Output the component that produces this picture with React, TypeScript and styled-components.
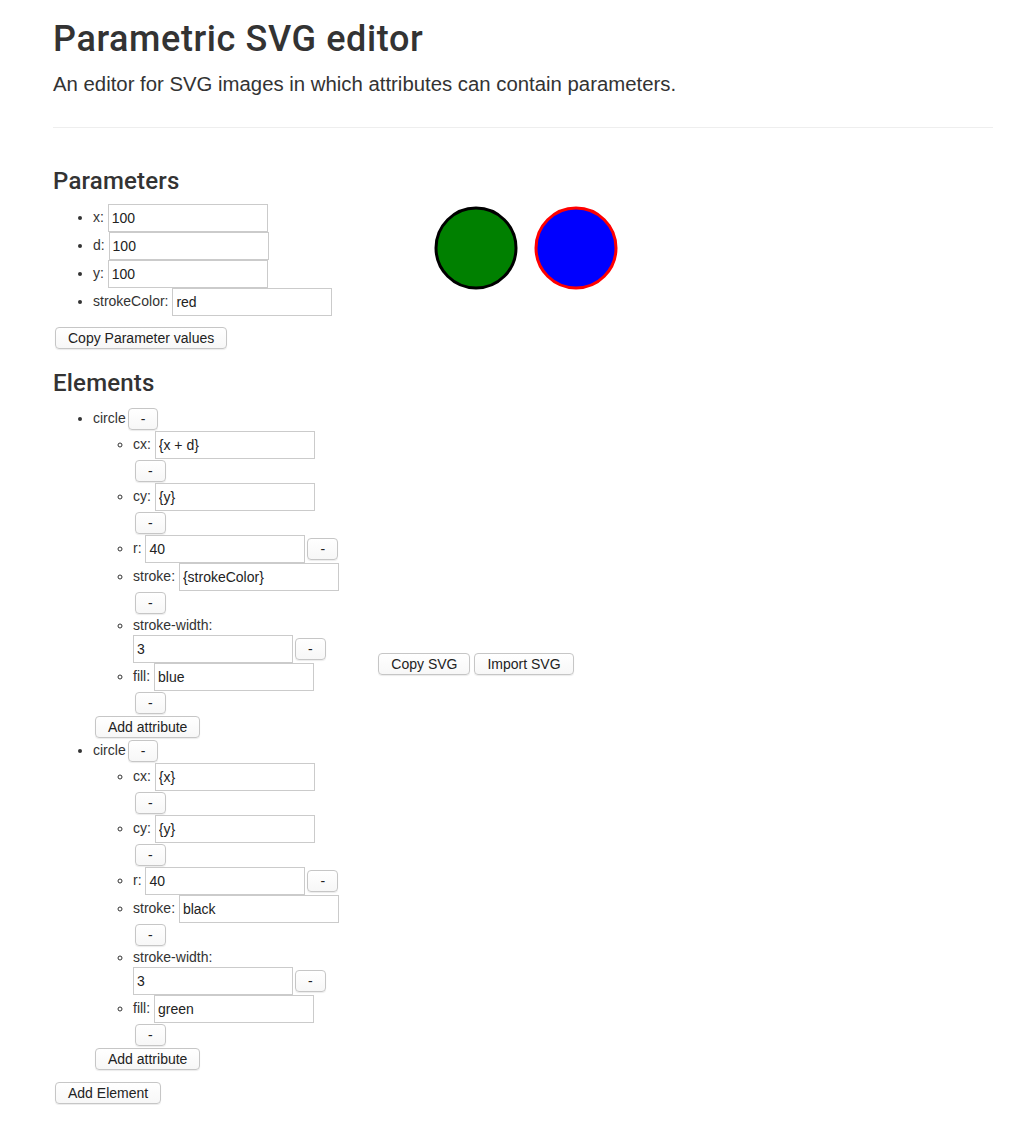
import React from "react";
import styled, { createGlobalStyle } from "styled-components";

const GlobalStyle = createGlobalStyle`
  html, body { margin: 0; padding: 0; background: #fff; }
  body {
    font-family: "Liberation Sans", Helvetica, Arial, sans-serif;
    font-size: 14px;
    line-height: 20px;
    color: #333;
  }
  * { box-sizing: border-box; }
`;

const Page = styled.div`
  width: 940px;
  margin-left: 53px;
`;

const Title = styled.h1`
  font-family: Roboto, "Liberation Sans", Arial, sans-serif;
  font-size: 36px;
  font-weight: 500;
  line-height: 39.6px;
  margin: 20px 0 10px;
  color: #333;
  letter-spacing: 0.6px;
`;

const Lead = styled.p`
  font-size: 20.35px;
  line-height: 29.4px;
  margin: 0 0 28px;
  color: #333;
`;

const Divider = styled.hr`
  border: 0;
  border-top: 1px solid #eee;
  margin: 0 0 20px;
  height: 0;
`;

const Columns = styled.div`
  display: grid;
  grid-template-columns: 293.33px 1fr;
  column-gap: 30px;
`;

const Column = styled.div``;

const SectionTitle = styled.h3`
  font-family: Roboto, "Liberation Sans", Arial, sans-serif;
  font-size: 24px;
  font-weight: 500;
  line-height: 26.4px;
  margin: 20px 0 10px;
  color: #333;
  letter-spacing: 0.2px;
`;

const List = styled.ul<{ $nested?: boolean }>`
  margin: 0 0 ${(p) => (p.$nested ? "0" : "10px")};
  padding-left: 40px;
  list-style-type: ${(p) => (p.$nested ? "circle" : "disc")};
`;

const Item = styled.li`
  line-height: 20px;
`;

const TextInput = styled.input`
  display: inline-block;
  vertical-align: middle;
  width: 160px;
  height: 28px;
  margin: 0;
  padding: 0 3px;
  border: 1px solid #cbcbcb;
  border-radius: 0;
  background: #fff;
  font-family: "Liberation Sans", Helvetica, Arial, sans-serif;
  font-size: 14px;
  color: #222;
  outline: none;
`;

const Button = styled.button`
  display: inline-block;
  vertical-align: middle;
  height: 22px;
  margin: 1px 2px;
  padding: 0 12px;
  border: 1px solid #c6c6c6;
  border-radius: 4px;
  background: linear-gradient(#ffffff, #f7f7f7);
  box-shadow: 0 1px 1px rgba(0, 0, 0, 0.08);
  font-family: "Liberation Sans", Helvetica, Arial, sans-serif;
  font-size: 14px;
  line-height: 20px;
  color: #222;
  cursor: pointer;
`;

const Canvas = styled.svg`
  display: block;
  width: 500px;
  height: 500px;
`;

const Toolbar = styled.div`
  margin-top: 4px;
  line-height: 20px;
`;

const params = [
  { name: "x", value: "100" },
  { name: "d", value: "100" },
  { name: "y", value: "100" },
  { name: "strokeColor", value: "red" },
];

const elements = [
  {
    tag: "circle",
    attrs: [
      ["cx", "{x + d}"],
      ["cy", "{y}"],
      ["r", "40"],
      ["stroke", "{strokeColor}"],
      ["stroke-width", "3"],
      ["fill", "blue"],
    ],
  },
  {
    tag: "circle",
    attrs: [
      ["cx", "{x}"],
      ["cy", "{y}"],
      ["r", "40"],
      ["stroke", "black"],
      ["stroke-width", "3"],
      ["fill", "green"],
    ],
  },
];

export default function App() {
  return (
    <>
      <GlobalStyle />
      <Page>
        <Title>Parametric SVG editor</Title>
        <Lead>An editor for SVG images in which attributes can contain parameters.</Lead>
        <Divider />
        <Columns>
          <Column>
            <SectionTitle>Parameters</SectionTitle>
            <List>
              {params.map((p) => (
                <Item key={p.name}>
                  {p.name}: <TextInput defaultValue={p.value} />
                </Item>
              ))}
            </List>
            <Button>Copy Parameter values</Button>
            <SectionTitle>Elements</SectionTitle>
            <List>
              {elements.map((el, i) => (
                <Item key={i}>
                  {el.tag}
                  <Button>-</Button>
                  <List $nested>
                    {el.attrs.map(([k, v]) => (
                      <Item key={k}>
                        {k}: <TextInput defaultValue={v} />
                        <Button>-</Button>
                      </Item>
                    ))}
                  </List>
                  <Button>Add attribute</Button>
                </Item>
              ))}
            </List>
            <Button>Add Element</Button>
          </Column>
          <Column>
            <Canvas viewBox="0 0 500 500">
              <circle cx={100} cy={100} r={40} stroke="black" strokeWidth={3} fill="green" />
              <circle cx={200} cy={100} r={40} stroke="red" strokeWidth={3} fill="blue" />
            </Canvas>
            <Toolbar>
              <Button>Copy SVG</Button>
              <Button>Import SVG</Button>
            </Toolbar>
          </Column>
        </Columns>
      </Page>
    </>
  );
}
